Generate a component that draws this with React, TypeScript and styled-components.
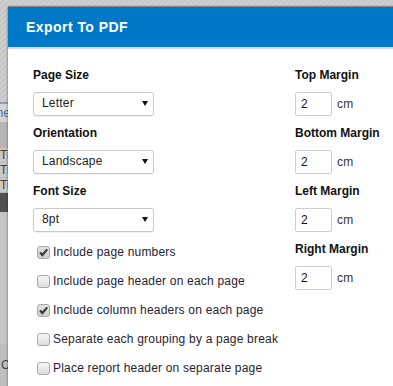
import React from 'react';
import styled, { createGlobalStyle } from 'styled-components';

const Global = createGlobalStyle`
  html, body { margin: 0; padding: 0; overflow: hidden; }
  body { font-family: "Liberation Sans", Arial, sans-serif; }
`;

const Screen = styled.div`
  position: relative;
  width: 393px;
  height: 386px;
  overflow: hidden;
  background: repeating-linear-gradient(135deg, #cecece 0 2px, #c7c7c7 2px 4px);
`;

/* ---------- page behind the modal ---------- */
const BackPage = styled.div`
  display: flex;
  flex-direction: column;
  width: 100%;
  height: 100%;
`;

const Crumbs = styled.div`
  height: 7px;
  overflow: hidden;
  display: flex;
  align-items: flex-end;
  padding-left: 99px;
  gap: 17px;
  font: 12px "Liberation Sans", Arial, sans-serif;
  color: #3a2a3a;
`;

const Crumb = styled.span`
  line-height: 12px;
  margin-bottom: 8px;
`;

const Spacer = styled.div<{ $h: number }>`
  height: ${(p) => p.$h}px;
`;

const HeadRow = styled.div`
  height: 18px;
  border-top: 2px solid #8a9db6;
  background: #d4d4d4;
  display: flex;
  align-items: center;
  font: 12px "Liberation Sans", Arial, sans-serif;
  color: #50688a;
`;

const HeadText = styled.span`
  margin-left: -22px;
`;

const BandRow = styled.div`
  height: 26px;
  background: #b6b6b6;
`;

const DataRow = styled.div`
  height: 15px;
  background: #c9c9c9;
  border-bottom: 1px solid #b9b9b9;
  display: flex;
  align-items: center;
  font: 12px "Liberation Sans", Arial, sans-serif;
  color: #4a3d22;
  box-sizing: border-box;
`;

const DarkRow = styled.div`
  height: 19px;
  background: #505050;
`;

const Filler = styled.div`
  height: 132px;
  background: #c6c6c6;
`;

const Footer = styled.div`
  flex: 1;
  background: #bebebe;
  display: flex;
  align-items: center;
  font: 12px "Liberation Sans", Arial, sans-serif;
  color: #444;
  padding-left: 1px;
`;

/* ---------- modal ---------- */
const Dialog = styled.section`
  position: absolute;
  left: 8px;
  top: 7px;
  width: 440px;
  height: 420px;
  background: #fff;
  box-shadow: 0 -1px 1px rgba(0, 0, 0, 0.3), -1px 0 2px rgba(0, 0, 0, 0.2);
  display: flex;
  flex-direction: column;
`;

const Header = styled.header`
  height: 40px;
  background: #0078c8;
  border-bottom: 2px solid #dadada;
  display: flex;
  align-items: center;
  padding-left: 18px;
  color: #fff;
  font: bold 14px "Liberation Sans", Arial, sans-serif;
  letter-spacing: 0.45px;
`;

const Body = styled.div`
  display: grid;
  grid-template-columns: 262px auto;
  padding: 19px 0 0 25px;
  font: 12px "Liberation Sans", Arial, sans-serif;
  letter-spacing: 0.2px;
  color: #222;
`;

const Column = styled.div`
  display: flex;
  flex-direction: column;
`;

const Fields = styled.div`
  display: flex;
  flex-direction: column;
  gap: 10px;
`;

const Field = styled.div`
  display: flex;
  flex-direction: column;
  align-items: flex-start;
`;

const Label = styled.div`
  font-weight: bold;
  font-size: 12px;
  line-height: 15px;
  letter-spacing: 0;
  color: #111;
  margin-bottom: 9px;
`;

const Select = styled.div`
  box-sizing: border-box;
  width: 121px;
  height: 24px;
  border: 1px solid #c9c9c9;
  border-radius: 3px;
  box-shadow: 0 1px 1px rgba(0, 0, 0, 0.06);
  padding: 0 5px 1px 8px;
  display: flex;
  align-items: center;
  justify-content: space-between;
  color: #222;
  line-height: 15px;
`;

const InputRow = styled.div`
  display: flex;
  align-items: center;
  gap: 5px;
  color: #333;
`;

const NumInput = styled.div`
  box-sizing: border-box;
  width: 37px;
  height: 24px;
  border: 1px solid #cdcdcd;
  border-radius: 2px;
  padding: 0 0 1px 5px;
  display: flex;
  align-items: center;
  color: #111;
`;

const Checklist = styled.div`
  display: flex;
  flex-direction: column;
  margin-top: 6px;
`;

const CheckRow = styled.label`
  height: 29px;
  display: flex;
  align-items: center;
  color: #262232;
  line-height: 15px;
  white-space: nowrap;
`;

const Box = styled.span<{ $checked?: boolean }>`
  box-sizing: border-box;
  width: 13px;
  height: 13px;
  margin: 0 3px 0 4px;
  border: 1px solid #a8a8a8;
  border-radius: 3px;
  background: ${(p) =>
    p.$checked
      ? 'linear-gradient(#e2e2e2, #cfcfcf)'
      : 'linear-gradient(#f6f6f6, #dddddd)'};
  display: flex;
  align-items: center;
  justify-content: center;
`;

const Arrow = () => (
  <svg width="6" height="5" viewBox="0 0 6 5">
    <polygon points="0,0 6,0 3,5" fill="#111" />
  </svg>
);

const Check = () => (
  <svg width="11" height="11" viewBox="0 0 11 11">
    <path d="M2 5.5 L4.4 8 L9.2 2.4" fill="none" stroke="#3a3a3a" strokeWidth="2.2" />
  </svg>
);

const selects = [
  { label: 'Page Size', value: 'Letter' },
  { label: 'Orientation', value: 'Landscape' },
  { label: 'Font Size', value: '8pt' },
];

const margins = ['Top Margin', 'Bottom Margin', 'Left Margin', 'Right Margin'];

const options = [
  { text: 'Include page numbers', checked: true },
  { text: 'Include page header on each page', checked: false },
  { text: 'Include column headers on each page', checked: true },
  { text: 'Separate each grouping by a page break', checked: false },
  { text: 'Place report header on separate page', checked: false },
];

export default function App() {
  return (
    <>
      <Global />
      <Screen>
        <BackPage>
          <Crumbs>
            <Crumb>p</Crumb>
            <Crumb>g</Crumb>
            <Crumb>|</Crumb>
          </Crumbs>
          <Spacer $h={95} />
          <HeadRow>
            <HeadText>Name</HeadText>
          </HeadRow>
          <BandRow />
          <DataRow>Ti</DataRow>
          <DataRow>Ti</DataRow>
          <DataRow>Ti</DataRow>
          <DarkRow />
          <Filler />
          <Footer>C</Footer>
        </BackPage>

        <Dialog>
          <Header>Export To PDF</Header>
          <Body>
            <Column>
              <Fields>
                {selects.map((s) => (
                  <Field key={s.label}>
                    <Label>{s.label}</Label>
                    <Select>
                      <span>{s.value}</span>
                      <Arrow />
                    </Select>
                  </Field>
                ))}
              </Fields>
              <Checklist>
                {options.map((o) => (
                  <CheckRow key={o.text}>
                    <Box $checked={o.checked}>{o.checked && <Check />}</Box>
                    {o.text}
                  </CheckRow>
                ))}
              </Checklist>
            </Column>
            <Column>
              <Fields>
                {margins.map((m) => (
                  <Field key={m}>
                    <Label>{m}</Label>
                    <InputRow>
                      <NumInput>2</NumInput>
                      <span>cm</span>
                    </InputRow>
                  </Field>
                ))}
              </Fields>
            </Column>
          </Body>
        </Dialog>
      </Screen>
    </>
  );
}
